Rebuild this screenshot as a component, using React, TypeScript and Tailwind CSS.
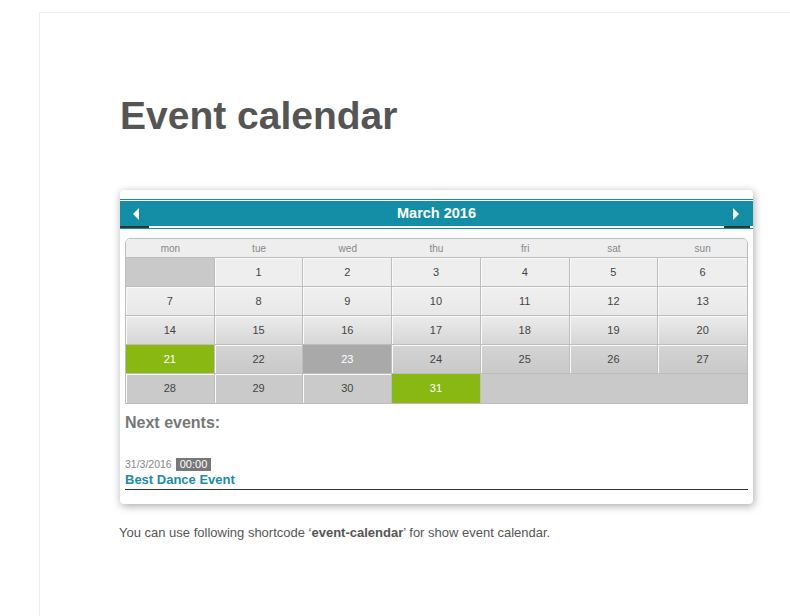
import React from 'react';

type Day = { n?: number; kind?: 'event' | 'today' | 'empty' };

const weekdays = ['mon', 'tue', 'wed', 'thu', 'fri', 'sat', 'sun'];

const weeks: Day[][] = [
  [{ kind: 'empty' }, { n: 1 }, { n: 2 }, { n: 3 }, { n: 4 }, { n: 5 }, { n: 6 }],
  [{ n: 7 }, { n: 8 }, { n: 9 }, { n: 10 }, { n: 11 }, { n: 12 }, { n: 13 }],
  [{ n: 14 }, { n: 15 }, { n: 16 }, { n: 17 }, { n: 18 }, { n: 19 }, { n: 20 }],
  [{ n: 21, kind: 'event' }, { n: 22 }, { n: 23, kind: 'today' }, { n: 24 }, { n: 25 }, { n: 26 }, { n: 27 }],
  [{ n: 28 }, { n: 29 }, { n: 30 }, { n: 31, kind: 'event' }, { kind: 'empty' }, { kind: 'empty' }, { kind: 'empty' }],
];

// background per week row
const rowBg = [
  'bg-[#eeeeee]',
  'bg-gradient-to-b from-[#f0f0f0] to-[#e8e8e8]',
  'bg-gradient-to-b from-[#ececec] to-[#d6d6d6]',
  'bg-gradient-to-b from-[#d4d4d4] to-[#c9c9c9]',
  'bg-[#cacaca]',
];

function DayCell({ day, row, col }: { day: Day; row: number; col: number }) {
  const last = col === 6;
  const isLastRow = row === weeks.length - 1;
  if (day.kind === 'empty') {
    return (
      <div
        className={[
          'h-[29px] bg-[#c9c9c9]',
          isLastRow ? '' : 'border-b border-[#bdbdbd]',
          isLastRow || last ? '' : 'border-r border-[#bdbdbd]',
        ].join(' ')}
      />
    );
  }
  let bg = rowBg[row] + ' text-[#444] shadow-[inset_1px_1px_0_#fafafa]';
  if (day.kind === 'event') bg = 'bg-[#89b813] text-white';
  if (day.kind === 'today') bg = 'bg-[#a9a9a9] text-white';
  return (
    <div
      className={[
        'h-[29px] flex items-center justify-center text-[11px]',
        bg,
        isLastRow ? '' : 'border-b border-[#bdbdbd]',
        last ? '' : 'border-r border-[#bdbdbd]',
      ].join(' ')}
    >
      {day.n}
    </div>
  );
}

function Arrow({ dir }: { dir: 'left' | 'right' }) {
  return (
    <svg width="6" height="12" viewBox="0 0 6 12" className="block">
      {dir === 'left' ? <polygon points="6,0 6,12 0,6" fill="#fff" /> : <polygon points="0,0 0,12 6,6" fill="#fff" />}
    </svg>
  );
}

function EventCalendar() {
  return (
    <div className="w-[633px] h-[314px] bg-white rounded-[4px] shadow-[1px_2px_8px_rgba(0,0,0,0.35)] pt-[9px] px-[5px] relative">
      {/* Month header */}
      <div className="-mx-[5px]">
        <div className="h-px bg-[#148ea7]" />
        <div className="h-px bg-white" />
        <div className="h-[25px] bg-[#148ea7] flex items-center">
          <div className="w-[29px] h-full flex items-center pl-[13px]">
            <Arrow dir="left" />
          </div>
          <div className="flex-1 text-center text-white font-bold text-[14.5px]">March 2016</div>
          <div className="w-[29px] h-full flex items-center pl-[9px]">
            <Arrow dir="right" />
          </div>
        </div>
        <div className="h-[2px] flex bg-white">
          <div className="w-[29px] bg-[#333]" />
          <div className="flex-1" />
          <div className="w-[26px] mr-[3px] bg-[#333]" />
        </div>
        <div className="h-px bg-[#148ea7]" />
      </div>

      {/* Grid */}
      <div className="mt-[9px] border border-[#bdbdbd] rounded-t-[5px] overflow-hidden">
        <div className="grid grid-cols-7 h-[19px] bg-[#eeeeee] border-b border-[#bdbdbd]">
          {weekdays.map((d) => (
            <div key={d} className="flex items-center justify-center text-[10px] text-[#888]">
              {d}
            </div>
          ))}
        </div>
        {weeks.map((week, r) => (
          <div key={r} className="grid grid-cols-7">
            {week.map((day, c) => (
              <DayCell key={c} day={day} row={r} col={c} />
            ))}
          </div>
        ))}
      </div>

      {/* Next events */}
      <div className="mt-[10px] text-[16px] leading-[18px] font-bold text-[#777]">Next events:</div>
      <div className="mt-[26px] flex items-center h-[13px]">
        <span className="text-[10.5px] text-[#888]">31/3/2016</span>
        <span className="ml-[4px] h-[13px] px-[4px] bg-[#777] text-white text-[11px] leading-[13px]">00:00</span>
      </div>
      <div className="mt-px text-[13px] leading-[15px] font-bold text-[#1a8caa]">Best Dance Event</div>
      <div className="mt-[2px] h-px bg-[#333]" />
    </div>
  );
}

export default function App() {
  return (
    <div className="min-h-screen bg-white pt-[12px] pl-[39px] overflow-hidden" style={{ fontFamily: '"Liberation Sans", Arial, sans-serif' }}>
      <div className="min-h-[604px] border-l border-t border-[#eeeeee] pl-[80px] pt-[83px] pb-10">
        <h1 className="text-[39px] leading-[40px] font-bold text-[#555]">Event calendar</h1>
        <div className="mt-[54px]">
          <EventCalendar />
        </div>
        <p className="mt-[20px] -ml-[1px] text-[13px] leading-[18px] text-[#555]">
          You can use following shortcode ‘<b>event-calendar</b>’ for show event calendar.
        </p>
      </div>
    </div>
  );
}
